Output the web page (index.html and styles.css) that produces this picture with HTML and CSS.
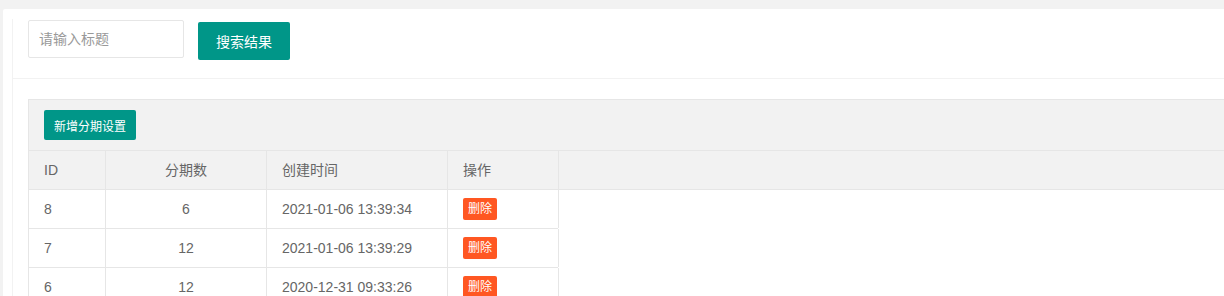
FILE: index.html
```html
<!DOCTYPE html>
<html lang="zh-CN">
<head>
<meta charset="utf-8">
<title>分期设置</title>
<link rel="stylesheet" href="styles.css">
</head>
<body>
<div class="card">
  <div class="panel">
    <div class="search">
      <input class="search-input" type="text" placeholder="请输入标题">
      <button class="btn btn-search">搜索结果</button>
    </div>
    <div class="content">
      <div class="toolbar">
        <button class="btn btn-sm">新增分期设置</button>
      </div>
      <div class="thead">
        <div class="cell c-id">ID</div>
        <div class="cell c-num center">分期数</div>
        <div class="cell c-time">创建时间</div>
        <div class="cell c-op">操作</div>
        <div class="cell c-fill"></div>
      </div>
      <div class="tbody">
        <div class="row">
          <div class="cell c-id">8</div>
          <div class="cell c-num center">6</div>
          <div class="cell c-time">2021-01-06 13:39:34</div>
          <div class="cell c-op"><button class="btn btn-xs">删除</button></div>
        </div>
        <div class="row">
          <div class="cell c-id">7</div>
          <div class="cell c-num center">12</div>
          <div class="cell c-time">2021-01-06 13:39:29</div>
          <div class="cell c-op"><button class="btn btn-xs">删除</button></div>
        </div>
        <div class="row">
          <div class="cell c-id">6</div>
          <div class="cell c-num center">12</div>
          <div class="cell c-time">2020-12-31 09:33:26</div>
          <div class="cell c-op"><button class="btn btn-xs">删除</button></div>
        </div>
      </div>
    </div>
  </div>
</div>
</body>
</html>
```
FILE: styles.css
```css
* { box-sizing: border-box; }
html, body {
  margin: 0;
  padding: 0;
  background: #f2f2f2;
  font-family: "Liberation Sans", "Noto Sans CJK SC", sans-serif;
  font-size: 14px;
  color: #666;
  overflow: hidden;
}
.card {
  margin: 9px 0 0 3px;
  background: #fff;
  border-radius: 2px 0 0 0;
  padding: 10px 0 0 9px;
  height: 400px;
}
.panel {
  border-left: 1px solid #f2f2f2;
  height: 100%;
}
.search {
  display: flex;
  align-items: flex-start;
  padding: 1px 0 0 15px;
  height: 60px;
  border-bottom: 1px solid #f2f2f2;
}
.search-input {
  width: 156px;
  height: 38px;
  border: 1px solid #e6e6e6;
  border-radius: 2px;
  padding: 0 10px;
  font-family: inherit;
  font-size: 14px;
  color: #666;
  outline: none;
  background: #fff;
}
.search-input::placeholder { color: #999; }
.btn {
  border: none;
  border-radius: 2px;
  background: #009688;
  color: #fff;
  font-family: inherit;
  white-space: nowrap;
  cursor: pointer;
  padding: 0;
}
.btn-search {
  margin: 2px 0 0 14px;
  height: 38px;
  padding: 0 18px;
  font-size: 14px;
}
.btn-sm {
  height: 30px;
  padding: 0 10px;
  font-size: 12px;
}
.btn-xs {
  height: 22px;
  line-height: 22px;
  padding: 0 5px;
  font-size: 12px;
  background: #ff5722;
  display: block;
}
.content {
  padding: 20px 0 0 15px;
}
.toolbar {
  border: 1px solid #e6e6e6;
  border-right: none;
  background: #f2f2f2;
  padding: 10px 15px;
  height: 52px;
}
.thead {
  display: flex;
  background: #f2f2f2;
  border-left: 1px solid #e6e6e6;
  border-bottom: 1px solid #e6e6e6;
}
.tbody { display: flex; flex-direction: column; }
.row {
  display: flex;
  border-left: 1px solid #e6e6e6;
  border-bottom: 1px solid #e6e6e6;
  width: 530px;
}
.cell {
  height: 38px;
  line-height: 38px;
  padding: 0 15px;
  border-right: 1px solid #e6e6e6;
  flex: none;
  white-space: nowrap;
}
.center { text-align: center; }
.c-id { width: 77px; }
.c-num { width: 161px; }
.c-time { width: 181px; }
.c-op { width: 111px; display: flex; align-items: center; }
.c-fill { flex: 1; border-right: none; }
```
